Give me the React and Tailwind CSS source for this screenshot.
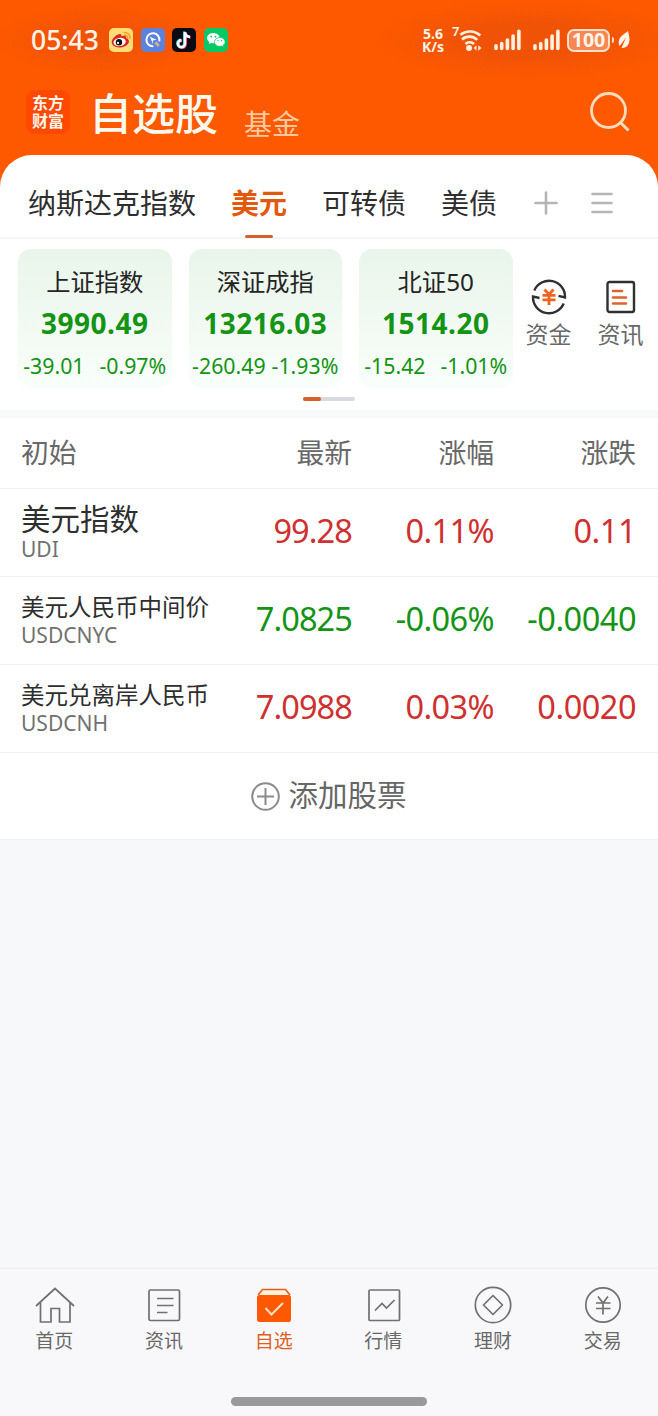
import clsx from "clsx";

const TABS = ["纳斯达克指数", "美元", "可转债", "美债"];

const INDEXES = [
    { name: "上证指数", value: "3990.49", diff: "-39.01", rate: "-0.97%" },
    { name: "深证成指", value: "13216.03", diff: "-260.49", rate: "-1.93%" },
    { name: "北证50", value: "1514.20", diff: "-15.42", rate: "-1.01%" },
];

const STOCKS = [
    { name: "美元指数", code: "UDI", price: "99.28", rate: "0.11%", diff: "0.11", up: true, large: true },
    { name: "美元人民币中间价", code: "USDCNYC", price: "7.0825", rate: "-0.06%", diff: "-0.0040", up: false },
    { name: "美元兑离岸人民币", code: "USDCNH", price: "7.0988", rate: "0.03%", diff: "0.0020", up: true },
];

function WeiboIcon() {
    return (
        <svg className="size-6" viewBox="0 0 24 24">
            <rect width="24" height="24" rx="5" fill="#ffdc78" />
            <path d="M15 4.600a5.200 5.200 0 0 1 6 6.200M15.600 7.300a2.600 2.600 0 0 1 3 3" fill="none" stroke="#f0a020" strokeWidth="1.400" strokeLinecap="round" />
            <path d="M11 6c1.500 0 1.700 1.400 1.400 2.300 2.500-1 5.200-.8 4.700 1.900 2 .6 3 1.800 2.800 3.500-.4 3.300-4.800 5.800-9.200 5.800-4.400 0-8-2.100-8-5.500C2.700 10.500 8 6 11 6z" fill="#dc2626" />
            <ellipse cx="10.600" cy="14" rx="6.200" ry="4.100" fill="#fff" transform="rotate(-8 10.600 14)" />
            <circle cx="10" cy="14.200" r="3.200" fill="#111" />
            <circle cx="9" cy="14.900" r="1.100" fill="#fff" />
        </svg>
    );
}

function BrowserIcon() {
    return (
        <svg className="size-6" viewBox="0 0 24 24" fill="none">
            <rect width="24" height="24" rx="5" fill="#5b82dc" />
            <path d="M11.500 18.300a6.500 6.500 0 1 1 6.900-5.800" stroke="#fff" strokeWidth="2" strokeLinecap="round" />
            <path d="M9 8.800l6.500 3-3.700.8.2 3.600z" fill="#fff" />
            <path d="M14.300 14.300l3.500 3.700" stroke="#d0b08c" strokeWidth="3" />
        </svg>
    );
}

function TiktokIcon() {
    return (
        <svg className="size-6" viewBox="0 0 24 24" fill="none" strokeWidth="2.500">
            <rect width="24" height="24" rx="5" fill="#0c0b14" />
            <path d="M12.300 3.600v11.700a3.500 3.500 0 1 1-3.500-3.500M12.300 4c.4 2.800 2.200 4.200 5 4.400" stroke="#25e8e8" />
            <path d="M13.700 4.600v11.700a3.500 3.500 0 1 1-3.500-3.500M13.700 5c.4 2.800 2.200 4.200 5 4.400" stroke="#fe2c55" />
            <path d="M13 4.100v11.700a3.500 3.500 0 1 1-3.500-3.500M13 4.500c.4 2.800 2.200 4.200 5 4.400" stroke="#fff" />
        </svg>
    );
}

function WechatIcon() {
    return (
        <svg className="size-6" viewBox="0 0 24 24">
            <rect width="24" height="24" rx="5" fill="#07c865" />
            <path d="M9.300 5C5.800 5 3 7.200 3 10.100c0 1.700 1 3.100 2.400 4l-.6 2 2.300-1.200c.7.200 1.400.3 2.200.3 3.500 0 6.300-2.200 6.300-5.100S12.800 5 9.300 5z" fill="#fff" />
            <path d="M15.800 9.500c-3 0-5.300 1.900-5.300 4.400s2.300 4.400 5.300 4.400c.6 0 1.200-.1 1.800-.3l2 1-.5-1.700c1.200-.8 2-2 2-3.400 0-2.500-2.300-4.400-5.300-4.400z" fill="#fff" stroke="#07c865" strokeWidth=".7" />
            <g fill="#07c865">
                <circle cx="7.200" cy="8.700" r=".9" />
                <circle cx="11.400" cy="8.700" r=".9" />
                <circle cx="14" cy="12.600" r=".7" />
                <circle cx="17.600" cy="12.600" r=".7" />
            </g>
        </svg>
    );
}

function WifiIcon() {
    return (
        <svg className="w-[26px] h-6" viewBox="0 0 26 24" fill="none" stroke="#fff0e0" strokeWidth="2.700">
            <path d="M4.300 6.800a15.500 15.500 0 0 1 20 .7M6 11.500a11 11 0 0 1 15.300.4M9.500 16a6 6 0 0 1 8.500 0" />
            <circle cx="13" cy="20" r="3" fill="#fff0e0" stroke="none" />
            <path d="M20.500 17.300v5.400l-3-2.700zM22.300 17.300v5.400l3.200-2.700z" fill="#fff0e0" stroke="none" />
        </svg>
    );
}

function SignalIcon() {
    return (
        <svg className="w-[27px] h-[22px]" viewBox="0 0 27 22" stroke="#fff0e0" strokeWidth="3.600" strokeLinecap="round">
            <path d="M2 16.800v2.700M7.700 14.500v5M13.400 11v8.500M19.100 7v12.500M24.900 2.200v17.300" />
        </svg>
    );
}

function StatusBar() {
    return (
        <div className="h-20 flex items-center justify-between pl-[31px] pr-[28px] text-[#fff4e8] bg-[radial-gradient(ellipse_110px_36px_at_100px_40px,#f05306_30%,transparent),radial-gradient(ellipse_160px_40px_at_528px_40px,#f05306_40%,transparent)]">
            <div className="flex items-center">
                <span className="w-[78px] text-[26.500px] leading-none font-medium">05:43</span>
                <div className="flex gap-[7.500px]">
                    <WeiboIcon />
                    <BrowserIcon />
                    <TiktokIcon />
                    <WechatIcon />
                </div>
            </div>
            <div className="flex items-center">
                <div className="w-[30px] text-[14px] leading-[13px] font-bold">
                    <div className="pl-px">5.6</div>
                    <div>K/s</div>
                </div>
                <span className="-mt-[17px] text-[13px] leading-none font-semibold w-[4px]">7</span>
                <WifiIcon />
                <div className="flex gap-3 ml-[12px]">
                    <SignalIcon />
                    <SignalIcon />
                </div>
                <div className="ml-[7px] flex h-[23px] w-[43px] items-center justify-center rounded-[7px] border-2 border-[#ffe0c8] bg-[#f68654] text-[19.500px] leading-none font-bold">100</div>
                <div className="ml-[2px] h-[6px] w-[2px] rounded-r bg-[#ffe0c8]" />
                <svg className="ml-[4px] w-[12px] h-[18px]" viewBox="0 0 12 18">
                    <path d="M10 0C6 3 1 6 .7 11c-.1 2.500 1 4 1 4L8 6.500 3.500 17C9 17.500 11.500 13 11.500 8.500 11.500 5 10.500 2.500 10 0z" fill="#fff4e8" />
                </svg>
            </div>
        </div>
    );
}

function Header() {
    return (
        <div className="h-[75px] flex pl-[26px] pr-[28px]">
            <div className="mt-[10px] size-11 rounded-[9px] bg-[#ff4800] pt-[4px] text-center text-[16px] leading-[18px] font-bold text-[#fff4e8]">
                <div>东方</div>
                <div>财富</div>
            </div>
            <h1 className="ml-[19px] mt-[10px] text-[43px] leading-[48px] font-medium text-[#fff8ec]">自选股</h1>
            <span className="ml-[26px] mt-[27px] text-[28px] leading-[34px] text-[#ffc9a0]">基金</span>
            <svg className="ml-auto mt-[12px] size-10" viewBox="0 0 40 40" fill="none" stroke="#ffdcbc" strokeWidth="2.800">
                <circle cx="18.500" cy="18.500" r="17" />
                <path d="M30 30l8.500 8.500" strokeWidth="3" />
            </svg>
        </div>
    );
}

function Tabs() {
    return (
        <div className="h-[84px] flex items-center border-b-2 border-[#f4f5f6] pl-[28px] text-[28px] leading-[40px] text-[#2e2e2e]">
            <div className="flex gap-[35px] mt-[13px]">
                {TABS.map((tab) => (
                    <div key={tab} className={clsx("relative", tab === "美元" && "font-bold text-[#e2590d]")}>
                        {tab}
                        {tab === "美元" && <div className="absolute left-[14px] -bottom-[15px] h-[3px] w-7 rounded-full bg-[#d2622a]" />}
                    </div>
                ))}
            </div>
            <svg className="ml-[37px] mt-[13px] size-6" viewBox="0 0 24 24" stroke="#b5b5b5" strokeWidth="2.600" strokeLinecap="round">
                <path d="M12 1.500v21M1.500 12h21" />
            </svg>
            <svg className="ml-[32px] mt-[13px] size-6" viewBox="0 0 24 24" stroke="#b5b5b5" strokeWidth="2.600" strokeLinecap="round">
                <path d="M2.500 3h19M2.500 12h19M2.500 21h19" />
            </svg>
        </div>
    );
}

function FundIcon() {
    return (
        <svg className="w-9 h-[38px]" viewBox="0 0 36 38" fill="none" stroke="#303030" strokeWidth="2.400">
            <path d="M3.300 12.500A16 16 0 0 1 34 19.500L27.500 17.800M32.700 25.500A16 16 0 0 1 2 18.500L8.500 20" />
            <path d="M13.500 11.500l4.500 5 4.500-5M11.500 17.300h13M11.500 21.800h13M18 17v10" stroke="#ee6520" strokeWidth="2.800" />
        </svg>
    );
}

function NewsIcon() {
    return (
        <svg className="w-9 h-[38px]" viewBox="0 0 36 38" fill="none" stroke="#303030" strokeWidth="2.400">
            <rect x="4.500" y="4" width="26.500" height="30" rx="2" />
            <path d="M10 13h9M10 19.500h13M10 25.500h13" stroke="#e0622a" strokeWidth="2.600" strokeLinecap="round" />
        </svg>
    );
}

function Indexes() {
    return (
        <div className="h-[171px] pt-[10px] pl-[18px]">
            <div className="flex">
                <div className="flex gap-[17px]">
                    {INDEXES.map(({ name, value, diff, rate }) => (
                        <div key={name} className="flex h-[139px] w-[153.500px] flex-col items-center rounded-[13px] bg-gradient-to-b from-[#e9f5ea] to-[#f9fefa] pt-[17px] whitespace-nowrap text-[#149414]">
                            <div className="text-[24.300px] leading-[32px] text-[#252525]">{name}</div>
                            <div className="mt-[8px] text-[28px] leading-[34px] font-bold tracking-[0.500px]">{value}</div>
                            <div className="mt-[11px] flex min-w-[143px] justify-between gap-[6px] text-[21.300px] leading-[30px]">
                                <span>{diff}</span>
                                <span>{rate}</span>
                            </div>
                        </div>
                    ))}
                </div>
                <div className="ml-[13px] mt-[29px] flex gap-[26px] text-[23px] leading-[32px] text-[#686868]">
                    <div className="flex flex-col items-center">
                        <FundIcon />
                        <div className="mt-[2px]">资金</div>
                    </div>
                    <div className="flex flex-col items-center">
                        <NewsIcon />
                        <div className="mt-[2px]">资讯</div>
                    </div>
                </div>
            </div>
            <div className="mt-[9px] ml-[285px] h-[3.500px] w-[52px] rounded-full bg-[#d9d9df]">
                <div className="h-[3.500px] w-[18px] rounded-full bg-[#d2622a]" />
            </div>
        </div>
    );
}

function StockTable() {
    return (
        <div className="bg-white">
            <div className="grid grid-cols-[211px_120px_142px_142px] h-[71px] items-center border-b border-[#f1f1f2] pl-[21px] text-right text-[27.800px] text-[#686868]">
                <div className="text-left">初始</div>
                <div>最新</div>
                <div>涨幅</div>
                <div>涨跌</div>
            </div>
            {STOCKS.map(({ name, code, price, rate, diff, up, large }) => (
                <div key={code} className="grid grid-cols-[211px_120px_142px_142px] h-[88px] items-center border-b border-[#f1f1f2] pl-[21px] text-right">
                    <div className="-mt-[1px] whitespace-nowrap text-left">
                        <div className={clsx("text-[#2e2e2e]", large ? "text-[29.500px] leading-[34px]" : "text-[23.500px] leading-[30px]")}>{name}</div>
                        <div className="text-[21px] leading-[27px] text-[#717171]">{code}</div>
                    </div>
                    <div className={clsx("-mt-[2px] text-[32.500px] tracking-[-0.900px]", up ? "text-[#cf3030]" : "text-[#149414]")}>{price}</div>
                    <div className={clsx("-mt-[2px] text-[32.500px] tracking-[-0.600px]", up ? "text-[#cf3030]" : "text-[#149414]")}>{rate}</div>
                    <div className={clsx("-mt-[2px] text-[32.500px] tracking-[-0.500px]", up ? "text-[#cf3030]" : "text-[#149414]")}>{diff}</div>
                </div>
            ))}
            <div className="h-[87px] flex items-center justify-center gap-[8px] border-b border-[#f1f1f2] text-[29.500px] text-[#666]">
                <svg className="size-[29px]" viewBox="0 0 29 29" fill="none" stroke="#8b8b8f" strokeWidth="2">
                    <circle cx="14.500" cy="14.500" r="13.300" />
                    <path d="M14.500 6v17M6 14.500h17" />
                </svg>
                <span className="-mt-px">添加股票</span>
            </div>
        </div>
    );
}

const NAVS = [
    {
        label: "首页",
        icon: (
            <>
                <path d="M1 20L20 2.500 39 20" />
                <path d="M5.500 16.500V36H16V22.500h8.500V36H35V16.500" />
            </>
        ),
    },
    {
        label: "资讯",
        icon: (
            <>
                <rect x="5" y="4" width="30.500" height="30.500" rx="1.500" />
                <path d="M13 12.500h16.500M13 19.500h16.500M13 26.500h10.500" />
            </>
        ),
    },
    {
        label: "自选",
        active: true,
        icon: (
            <>
                <path d="M4 9l4.500-5.500h23L36 9" fill="#fff0dc" stroke="#e2601a" />
                <rect x="3" y="9" width="34" height="27" rx="2.500" fill="#ff5900" stroke="none" />
                <path d="M11.500 22l6 6.500L29 17" stroke="#ffe0c0" strokeWidth="2" />
            </>
        ),
    },
    {
        label: "行情",
        icon: (
            <>
                <rect x="5" y="4" width="30.500" height="30.500" rx="1" />
                <path d="M11 24.500l7-7 4.500 4.500 8-8" />
            </>
        ),
    },
    {
        label: "理财",
        icon: (
            <>
                <circle cx="20" cy="19" r="17.700" />
                <path d="M20 9.500l9.500 9.500-9.500 9.500-9.500-9.500z" strokeLinejoin="round" />
            </>
        ),
    },
    {
        label: "交易",
        icon: (
            <>
                <circle cx="20" cy="19" r="17.200" />
                <path d="M15 10.500l5 6.500 5-6.500M13 17h14.500M13 22.500h14.500M20 17v11.500" />
            </>
        ),
    },
];

function BottomNav() {
    return (
        <div className="h-[148px] flex flex-col border-t border-[#ececee] bg-[#f8f8fa] pt-[17px]">
            <div className="grid grid-cols-6">
                {NAVS.map(({ label, icon, active }) => (
                    <div key={label} className={clsx("flex flex-col items-center text-[19px] leading-[30px]", active ? "text-[#dc601e]" : "text-[#686868]")}>
                        <svg className="size-10" viewBox="0 0 40 40" fill="none" stroke="#707070" strokeWidth="1.700">
                            {icon}
                        </svg>
                        <div className="mr-px">{label}</div>
                    </div>
                ))}
            </div>
            <div className="mx-auto mt-[41px] h-[9px] w-[196px] rounded-full bg-[#999]" />
        </div>
    );
}

export default function App() {
    return (
        <main className="flex h-[1416px] w-[658px] flex-col overflow-hidden bg-[#f7f8fa] font-['Noto_Sans','Noto_Sans_CJK_SC',sans-serif]">
            <div className="bg-[#ff5900]">
                <StatusBar />
                <Header />
                <div className="rounded-t-[32px] bg-white">
                    <Tabs />
                    <Indexes />
                </div>
            </div>
            <div className="h-2 shrink-0 bg-[#f7f8fa]" />
            <StockTable />
            <div className="flex-1" />
            <BottomNav />
        </main>
    );
}
